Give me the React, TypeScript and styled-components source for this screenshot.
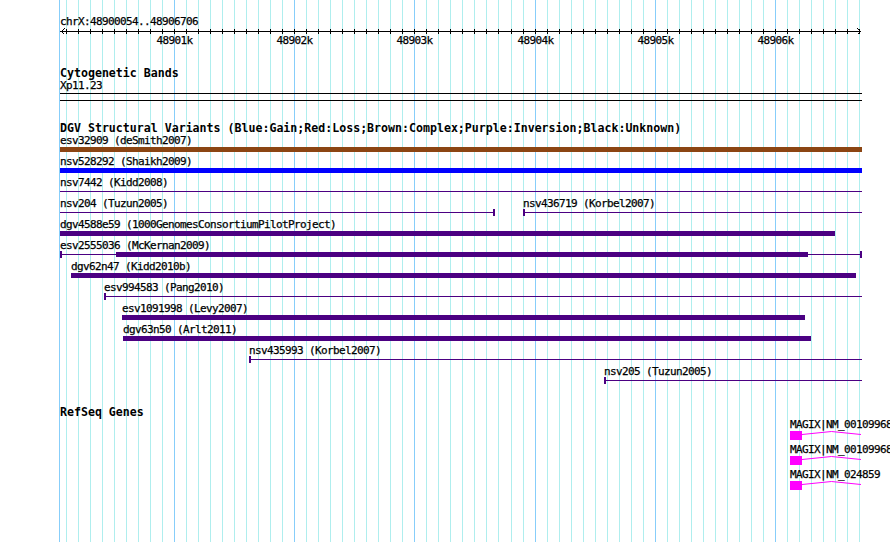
import styled, { createGlobalStyle } from 'styled-components';

const START = 48900054;
const END = 48906706;
const PX_PER_BP = 800 / (END - START);
const bpToX = (bp: number) => Math.floor(60.5 + (bp - START) * PX_PER_BP);

const gridBps = Array.from({ length: 67 }, (_, i) => 48900100 + i * 100);
const majorBps = gridBps.filter((bp) => bp % 1000 === 0);

type Segment = { kind: 'bar' | 'line' | 'tick'; w: number };
type Variant = { label: string; x: number; color: string; parts: Segment[] };

const INDIGO = '#4b0082';
const bar = (w: number): Segment => ({ kind: 'bar', w });
const line = (w: number): Segment => ({ kind: 'line', w });
const tick: Segment = { kind: 'tick', w: 2 };

// one array per row; x is the page pixel where the feature starts
const variantRows: Variant[][] = [
  [{ label: 'esv32909 (deSmith2007)', x: 60, color: '#8b4513', parts: [bar(802)] }],
  [{ label: 'nsv528292 (Shaikh2009)', x: 60, color: '#0000ff', parts: [bar(802)] }],
  [{ label: 'nsv7442 (Kidd2008)', x: 60, color: INDIGO, parts: [line(802)] }],
  [
    { label: 'nsv204 (Tuzun2005)', x: 60, color: INDIGO, parts: [line(433), tick] },
    { label: 'nsv436719 (Korbel2007)', x: 523, color: INDIGO, parts: [tick, line(337)] },
  ],
  [{ label: 'dgv4588e59 (1000GenomesConsortiumPilotProject)', x: 60, color: INDIGO, parts: [bar(775)] }],
  [
    {
      label: 'esv2555036 (McKernan2009)',
      x: 60,
      color: INDIGO,
      parts: [tick, line(54), bar(692), line(52), tick],
    },
  ],
  [{ label: 'dgv62n47 (Kidd2010b)', x: 71, color: INDIGO, parts: [bar(785)] }],
  [{ label: 'esv994583 (Pang2010)', x: 104, color: INDIGO, parts: [tick, line(756)] }],
  [{ label: 'esv1091998 (Levy2007)', x: 122, color: INDIGO, parts: [bar(683)] }],
  [{ label: 'dgv63n50 (Arlt2011)', x: 123, color: INDIGO, parts: [bar(688)] }],
  [{ label: 'nsv435993 (Korbel2007)', x: 249, color: INDIGO, parts: [tick, line(611)] }],
  [{ label: 'nsv205 (Tuzun2005)', x: 604, color: INDIGO, parts: [tick, line(256)] }],
];

const genes = ['MAGIX|NM_001099681', 'MAGIX|NM_001099682', 'MAGIX|NM_024859'];

const TRACK_LEFT = 60;

const App: React.FC = () => {
  return (
    <>
      <GlobalStyle />
      <Panel>
        <Grid width={890} height={542} shapeRendering="crispEdges">
          <rect x={59} y={0} width={1} height={542} fill="#87cefa" />
          {gridBps.map((bp) => (
            <rect
              key={bp}
              x={bpToX(bp)}
              y={0}
              width={1}
              height={542}
              fill={bp % 1000 === 0 ? '#87cefa' : '#afeeee'}
            />
          ))}
        </Grid>

        <Content>
          <RulerTitle>chrX:48900054..48906706</RulerTitle>
          <Axis>
            <svg width={890} height={20} shapeRendering="crispEdges">
              <rect x={60} y={3} width={801} height={1} fill="#000" />
              {gridBps.map((bp) => (
                <rect key={bp} x={bpToX(bp)} y={1} width={1} height={5} fill="#000" />
              ))}
              <polyline points="64.5,0.5 61.5,3.5 64.5,6.5" fill="none" stroke="#000" />
              <polyline points="857.5,0.5 860.5,3.5 857.5,6.5" fill="none" stroke="#000" />
            </svg>
            {majorBps.map((bp) => (
              <AxisLabel key={bp} style={{ left: bpToX(bp) + 0.5 - 18 }}>
                {Math.round(bp / 1000)}k
              </AxisLabel>
            ))}
          </Axis>

          <Track $gap={20}>
            <TrackTitle $height={11}>Cytogenetic Bands</TrackTitle>
            <Label>Xp11.23</Label>
            <Band />
          </Track>

          <Track $gap={21}>
            <TrackTitle $height={12}>
              DGV Structural Variants (Blue:Gain;Red:Loss;Brown:Complex;Purple:Inversion;Black:Unknown)
            </TrackTitle>
            {variantRows.map((row, i) => (
              <FeatureRow key={i} $height={21}>
                {row.map((f) => (
                  <Feature key={f.label} style={{ left: f.x - TRACK_LEFT }}>
                    <Label>{f.label}</Label>
                    <Glyph>
                      {f.parts.map((p, j) => (
                        <Part key={j} $kind={p.kind} $color={f.color} style={{ width: p.w }} />
                      ))}
                    </Glyph>
                  </Feature>
                ))}
              </FeatureRow>
            ))}
          </Track>

          <Track $gap={20}>
            <TrackTitle $height={12}>RefSeq Genes</TrackTitle>
            {genes.map((g) => (
              <FeatureRow key={g} $height={25}>
                <Feature style={{ left: 790 - TRACK_LEFT }}>
                  <Label>{g}</Label>
                  <GeneGlyph>
                    <Exon />
                    <svg width={60} height={9}>
                      <polyline points="0,3.5 29.5,0.5 59,3.5" fill="none" stroke="#ff00ff" />
                    </svg>
                  </GeneGlyph>
                </Feature>
              </FeatureRow>
            ))}
          </Track>
        </Content>
      </Panel>
    </>
  );
};

export default App;

const GlobalStyle = createGlobalStyle`
  html, body {
    margin: 0;
    padding: 0;
    background: #fff;
    overflow: hidden;
  }
`;

const Panel = styled.div`
  position: relative;
  width: 890px;
  height: 542px;
  overflow: hidden;
  background: #fff;
  color: #000;
  font-family: "DejaVu Sans Mono", "Liberation Mono", monospace;
  font-size: 11px;
  letter-spacing: -0.62px;
  line-height: 13px;
  -webkit-text-stroke: 0.25px #000;
`;

const Grid = styled.svg`
  position: absolute;
  top: 0;
  left: 0;
`;

const Content = styled.div`
  position: relative;
  padding-top: 15px;
`;

const RulerTitle = styled.div`
  margin-left: 60px;
  height: 13px;
  white-space: nowrap;
`;

const Axis = styled.div`
  position: relative;
  height: 20px;

  svg {
    display: block;
  }
`;

const AxisLabel = styled.span`
  position: absolute;
  top: 6px;
  width: 36px;
  text-align: center;
`;

const Track = styled.section<{ $gap: number }>`
  margin-top: ${({ $gap }) => $gap}px;
  margin-left: ${TRACK_LEFT}px;
  width: 802px;
`;

const TrackTitle = styled.div<{ $height: number }>`
  height: ${({ $height }) => $height}px;
  font-size: 11.6px;
  font-weight: bold;
  letter-spacing: 0;
  line-height: ${({ $height }) => $height}px;
  white-space: nowrap;
  -webkit-text-stroke: 0;
`;

const Label = styled.div`
  height: 13px;
  white-space: nowrap;
`;

const Band = styled.div`
  box-sizing: border-box;
  margin-top: 1px;
  height: 8px;
  border-top: 1px solid #000;
  border-bottom: 1px solid #000;
`;

const FeatureRow = styled.div<{ $height: number }>`
  position: relative;
  height: ${({ $height }) => $height}px;
`;

const Feature = styled.div`
  position: absolute;
  top: 0;
  display: flex;
  flex-direction: column;
`;

const Glyph = styled.div`
  display: flex;
  align-items: center;
  height: 7px;
  margin-top: -1px;
`;

const Part = styled.div<{ $kind: Segment['kind']; $color: string }>`
  flex: none;
  height: ${({ $kind }) => ($kind === 'bar' ? 5 : $kind === 'tick' ? 7 : 1)}px;
  background: ${({ $color }) => $color};
`;

const GeneGlyph = styled.div`
  display: flex;
  align-items: flex-start;

  svg {
    display: block;
    overflow: visible;
  }
`;

const Exon = styled.div`
  flex: none;
  width: 12px;
  height: 9px;
  background: #ff00ff;
`;
